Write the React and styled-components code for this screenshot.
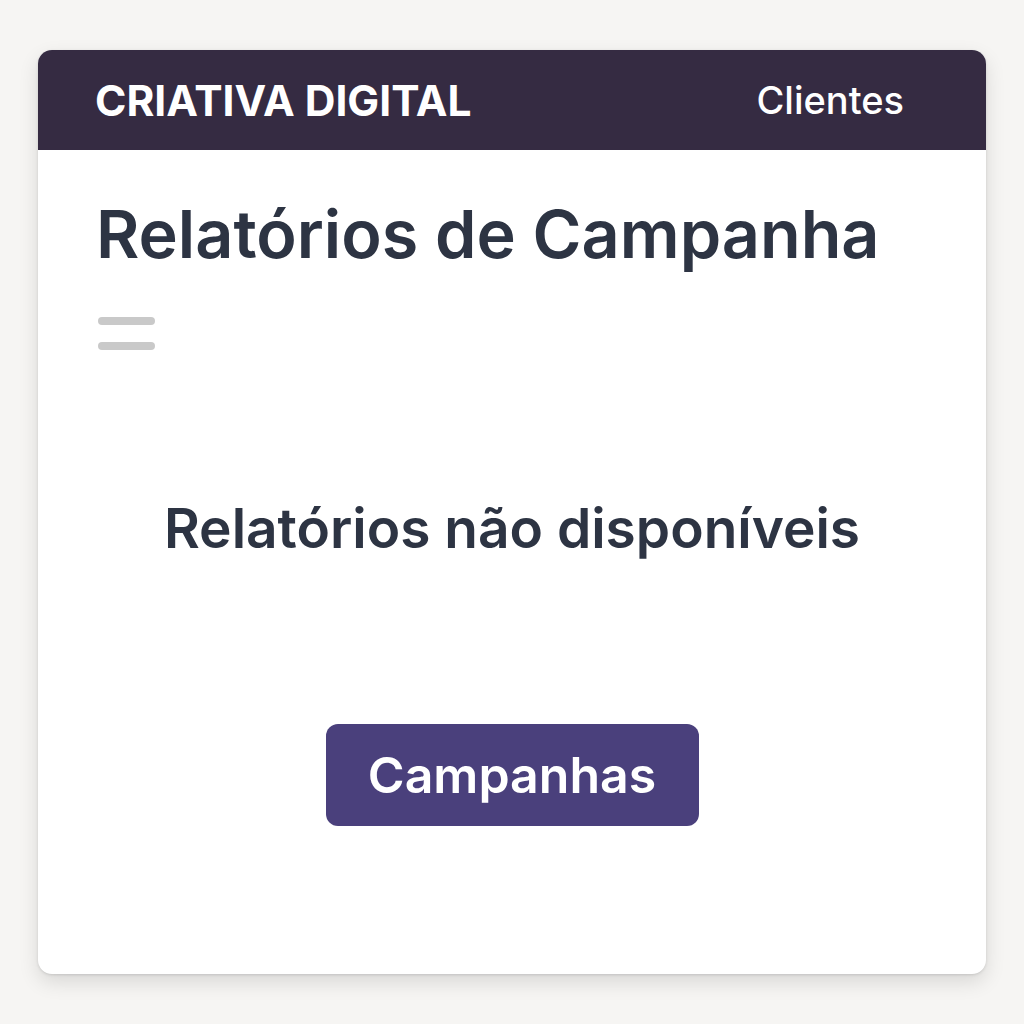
import React from 'react'
import styled, { createGlobalStyle } from 'styled-components'

const GlobalStyle = createGlobalStyle`
  html, body {
    margin: 0;
    padding: 0;
    background: #f6f5f3;
    font-family: Inter, "Noto Sans", sans-serif;
  }
`

const Page = styled.div`
  width: 1024px;
  height: 1024px;
  padding: 50px 38px;
  box-sizing: border-box;
`

const Card = styled.section`
  height: 924px;
  background: #ffffff;
  border-radius: 14px;
  overflow: hidden;
  box-shadow: 0 8px 20px rgba(0, 0, 0, 0.12), 0 1px 3px rgba(0, 0, 0, 0.12);
  display: flex;
  flex-direction: column;
`

const Header = styled.header`
  height: 100px;
  flex: none;
  background: #352b42;
  display: flex;
  align-items: center;
  justify-content: space-between;
  padding: 0 82px 0 57px;
  color: #ffffff;
`

const Brand = styled.div`
  font-size: 42.5px;
  font-weight: 700;
`

const NavLink = styled.a`
  font-size: 38px;
  font-weight: 500;
  color: #ffffff;
`

const Body = styled.main`
  flex: 1;
  padding: 44px 58px 0;
  display: flex;
  flex-direction: column;
`

const Title = styled.h1`
  margin: 0;
  font-size: 66.5px;
  font-weight: 600;
  color: #2d3443;
  line-height: 80px;
`

const Menu = styled.div`
  margin-top: 43px;
  display: flex;
  flex-direction: column;
  gap: 17px;
  padding-left: 2px;
`

const MenuLine = styled.span`
  width: 57px;
  height: 8px;
  border-radius: 4px;
  background: #c9c9c9;
`

const Empty = styled.p`
  margin: 145px 0 0;
  text-align: center;
  font-size: 55px;
  font-weight: 600;
  color: #2d3443;
  line-height: 66px;
`

const Action = styled.button`
  align-self: center;
  margin-top: 163px;
  width: 373px;
  height: 102px;
  border: none;
  border-radius: 12px;
  background: #4a407c;
  color: #ffffff;
  font-family: Inter, "Noto Sans", sans-serif;
  font-size: 50px;
  font-weight: 600;
`

export default function App() {
  return (
    <>
      <GlobalStyle />
      <Page>
        <Card>
          <Header>
            <Brand>CRIATIVA DIGITAL</Brand>
            <NavLink>Clientes</NavLink>
          </Header>
          <Body>
            <Title>Relatórios de Campanha</Title>
            <Menu>
              <MenuLine />
              <MenuLine />
            </Menu>
            <Empty>Relatórios não disponíveis</Empty>
            <Action>Campanhas</Action>
          </Body>
        </Card>
      </Page>
    </>
  )
}
